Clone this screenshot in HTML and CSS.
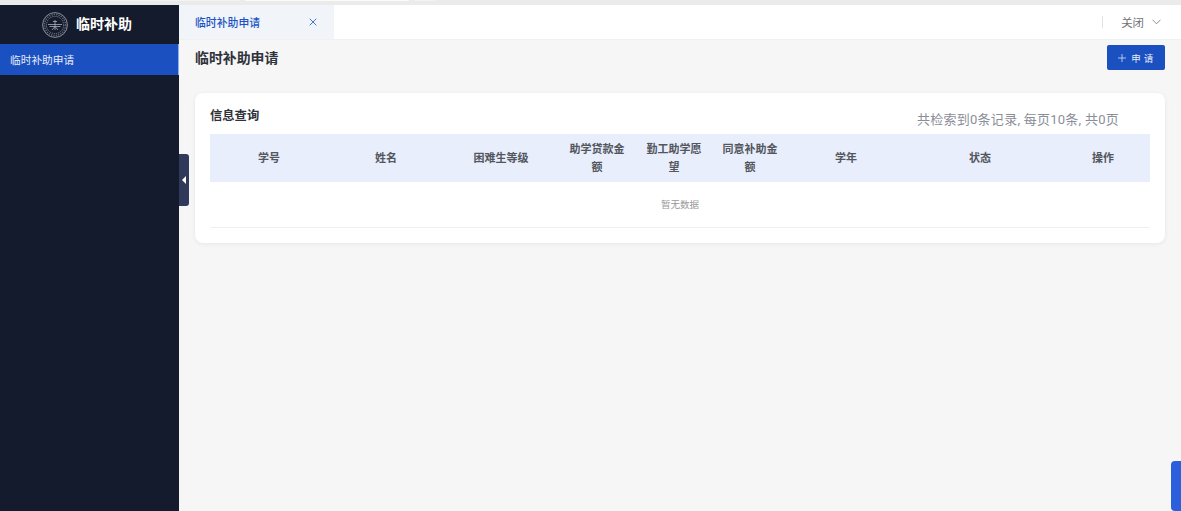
FILE: index.html
```html
<!DOCTYPE html>
<html lang="zh">
<head>
<meta charset="utf-8">
<title>临时补助申请</title>
<link rel="stylesheet" href="styles.css">
</head>
<body>
<div class="topstrip"><span class="seg seg-a"></span><span class="seg seg-b"></span><span class="seg seg-c"></span></div>
<div class="app">
  <aside class="sidebar">
    <div class="brand">
      <svg class="emblem" width="26" height="26" viewBox="0 0 26 26" fill="none" stroke="#a9adb6">
        <circle cx="13" cy="13" r="12.4" stroke-width=".8"/>
        <circle cx="13" cy="13" r="8.6" stroke-width=".6" stroke-dasharray="1.4 .8"/>
        <circle cx="13" cy="13" r="10.5" stroke-width="1.6" stroke-dasharray="1.2 1.2" opacity=".55"/>
        <path d="M6 12.5h14M7.5 14.5h11M11 9.5h4M13 8v10M10 18l3-3.5 3 3.5" stroke-width=".8"/>
      </svg>
      <span class="brand-name">临时补助</span>
    </div>
    <nav class="menu"><a class="menu-item">临时补助申请</a></nav>
  </aside>
  <main class="main">
    <header class="tabbar">
      <div class="tab">
        <span>临时补助申请</span>
        <svg width="8" height="8" viewBox="0 0 8 8" stroke="#1c53c4" stroke-width=".8" fill="none"><path d="M.7.7l6.6 6.6M7.3.7L.7 7.3"/></svg>
      </div>
      <div class="close-all">
        <span class="divider"></span>
        <span>关闭</span>
        <svg width="9" height="6" viewBox="0 0 9 6" stroke="#80838a" stroke-width=".9" fill="none"><path d="M.5.8l4 4 4-4"/></svg>
      </div>
    </header>
    <div class="page-head">
      <h1>临时补助申请</h1>
      <button class="apply"><svg width="8" height="8" viewBox="0 0 8 8" stroke="#d5dff5" stroke-width=".8" fill="none"><path d="M4 0v8M0 4h8"/></svg><span>申 请</span></button>
    </div>
    <section class="card">
      <div class="card-head">
        <h2>信息查询</h2>
        <p class="summary">共检索到0条记录, 每页10条, 共0页</p>
      </div>
      <div class="table">
        <div class="thead">
          <div>学号</div><div>姓名</div><div>困难生等级</div><div>助学贷款金额</div><div>勤工助学愿望</div><div>同意补助金额</div><div>学年</div><div>状态</div><div>操作</div>
        </div>
        <div class="empty">暂无数据</div>
      </div>
    </section>
    <div class="collapse"><i></i></div>
    <div class="float-tab"></div>
  </main>
</div>
</body>
</html>
```
FILE: styles.css
```css
* { box-sizing: border-box; }
html, body { margin: 0; height: 100%; overflow: hidden; }
body { font-family: "Noto Sans CJK SC", "Noto Sans", sans-serif; background: #f6f6f7; display: flex; flex-direction: column; }
.topstrip { height: 5px; background: #ebebeb; flex: none; display: flex; align-items: flex-start; padding-left: 72px; }
.seg { height: 1px; display: block; }
.seg-a { width: 168px; background: #f3f3f4; }
.seg-b { width: 164px; background: #fbfbfb; margin-left: 5px; }
.seg-c { width: 20px; background: #f3f3f4; margin-left: 6px; }
.app { flex: 1; display: flex; min-height: 0; }
.sidebar { width: 179px; flex: none; background: #141b2d; }
.brand { height: 39px; display: flex; align-items: center; padding-left: 42px; gap: 8px; }
.brand-name { color: #fff; font-size: 14px; font-weight: 700; line-height: 39px; position: relative; top: -1px; }
.menu-item { display: block; height: 31px; line-height: 31px; padding-left: 10px; font-size: 10.7px; color: #e8edf8; background: #1a50c0; border-right: 1px solid #8fb0ee; }
.main { flex: 1; position: relative; min-width: 0; }
.tabbar { height: 35px; background: #fff; display: flex; justify-content: space-between; align-items: center; border-bottom: 1px solid #f0f0f0; }
.tab { width: 155px; height: 100%; background: #f1f4f9; padding: 0 17px 0 16px; display: flex; align-items: center; justify-content: space-between; color: #1c53c4; font-size: 10.85px; font-weight: 500; }
.close-all { display: flex; align-items: center; font-size: 11.4px; color: #6f7277; padding-right: 20px; }
.divider { width: 1px; height: 12px; background: #e2e2e2; margin-right: 18px; }
.close-all svg { margin-left: 8px; }
.page-head { height: 53px; display: flex; justify-content: space-between; padding: 5px 16px 0 16px; }
.page-head h1 { margin: 0; font-size: 13.9px; font-weight: 600; color: #2f3239; line-height: 24px; }
.apply { width: 58px; height: 25px; border: 0; border-radius: 2px; background: #1a50c0; color: #e6ecfa; font: 400 9.5px "Noto Sans CJK SC", sans-serif; letter-spacing: .5px; display: flex; align-items: center; justify-content: center; gap: 5px; padding: 0; }
.card { margin: 0 16px; height: 150px; background: #fff; border-radius: 8px; box-shadow: 0 1px 4px rgba(30, 50, 90, .08); padding: 0 15px; }
.card-head { height: 41px; display: flex; justify-content: space-between; align-items: flex-end; }
.card-head h2 { margin: 0 0 9px; font-size: 12.3px; font-weight: 600; color: #2f3239; line-height: 20px; }
.summary { margin: 0 31px 4px 0; font-family: Roboto, "Noto Sans CJK SC", sans-serif; font-size: 13px; letter-spacing: .26px; color: #8b8e98; line-height: 20px; }
.thead { display: grid; grid-template-columns: 118px 116px 114px 78px 76px 76px 116px 152px 94px; height: 48px; background: #e8eefc; align-items: center; text-align: center; font-size: 11px; font-weight: 600; color: #53565d; line-height: 18px; padding-bottom: 3px; }
.thead > div { padding: 0 10px; }
.empty { height: 46px; line-height: 45px; text-align: center; font-size: 9.5px; color: #999; border-bottom: 1px solid #f0f0f0; }
.collapse { position: absolute; left: 0; top: 149px; width: 10px; height: 52px; background: #31395a; border-radius: 0 3px 3px 0; display: flex; align-items: center; justify-content: center; }
.collapse i { border-style: solid; border-width: 4px 4px 4px 0; border-color: transparent #fff transparent transparent; }
.float-tab { position: absolute; right: 0; bottom: 0; width: 10px; height: 50px; background: #2b5fdc; border-radius: 4px 0 0 4px; }
```
